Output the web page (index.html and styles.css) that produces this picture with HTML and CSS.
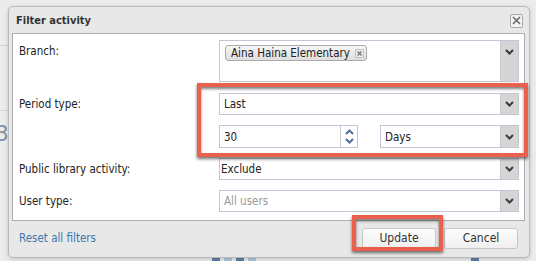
FILE: index.html
```html
<!DOCTYPE html>
<html lang="en">
<head>
    <meta charset="UTF-8">
    <meta name="viewport" content="width=device-width, initial-scale=1.0">
    <title>Filter activity</title>
    <link rel="stylesheet" href="styles.css">
</head>
<body>
    <!-- page behind the modal -->
    <div class="page">
        <div class="page-line line-a"></div>
        <div class="page-line line-b"></div>
        <div class="page-num">3</div>
        <div class="page-bars">
            <span class="bar dark"></span>
            <span class="bar light"></span>
            <span class="bar dark"></span>
            <span class="bar light"></span>
        </div>
        <span class="bar dark lone"></span>
    </div>

    <div class="dialog">
        <div class="dialog-title">
            <span>Filter activity</span>
            <span class="close-btn">
                <svg width="9" height="9" viewBox="0 0 9 9"><path d="M1 1 L8 8 M8 1 L1 8" stroke="#6a6a6a" stroke-width="1.6" fill="none"/></svg>
            </span>
        </div>

        <div class="dialog-body">
            <div class="row">
                <div class="label">Branch:</div>
                <div class="field multi">
                    <span class="chip">Aina Haina Elementary
                        <span class="chip-x">
                            <svg width="7" height="7" viewBox="0 0 7 7"><path d="M1.5 1.5 L5.5 5.5 M5.5 1.5 L1.5 5.5" stroke="#777" stroke-width="1.4" fill="none"/></svg>
                        </span>
                    </span>
                    <span class="arrow top">
                        <svg width="9" height="6" viewBox="0 0 9 6"><path d="M1 1 L4.5 4.5 L8 1" stroke="#3a3a3a" stroke-width="2" fill="none"/></svg>
                    </span>
                </div>
            </div>

            <div class="row">
                <div class="label">Period type:</div>
                <div class="stack">
                    <div class="field select">
                        <span class="value">Last</span>
                        <span class="arrow">
                            <svg width="9" height="6" viewBox="0 0 9 6"><path d="M1 1 L4.5 4.5 L8 1" stroke="#3a3a3a" stroke-width="2" fill="none"/></svg>
                        </span>
                    </div>
                    <div class="pair">
                        <div class="field spin">
                            <span class="value">30</span>
                            <span class="spinner">
                                <svg width="9" height="6" viewBox="0 0 9 6"><path d="M1 5 L4.5 1.5 L8 5" stroke="#4d6f9c" stroke-width="2" fill="none"/></svg>
                                <svg width="9" height="6" viewBox="0 0 9 6"><path d="M1 1 L4.5 4.5 L8 1" stroke="#4d6f9c" stroke-width="2" fill="none"/></svg>
                            </span>
                        </div>
                        <div class="field select">
                            <span class="value">Days</span>
                            <span class="arrow">
                                <svg width="9" height="6" viewBox="0 0 9 6"><path d="M1 1 L4.5 4.5 L8 1" stroke="#3a3a3a" stroke-width="2" fill="none"/></svg>
                            </span>
                        </div>
                    </div>
                </div>
            </div>

            <div class="row">
                <div class="label">Public library activity:</div>
                <div class="field select">
                    <span class="value tight">Exclude</span>
                    <span class="arrow">
                        <svg width="9" height="6" viewBox="0 0 9 6"><path d="M1 1 L4.5 4.5 L8 1" stroke="#3a3a3a" stroke-width="2" fill="none"/></svg>
                    </span>
                </div>
            </div>

            <div class="row last">
                <div class="label">User type:</div>
                <div class="field select">
                    <span class="value placeholder">All users</span>
                    <span class="arrow">
                        <svg width="9" height="6" viewBox="0 0 9 6"><path d="M1 1 L4.5 4.5 L8 1" stroke="#3a3a3a" stroke-width="2" fill="none"/></svg>
                    </span>
                </div>
            </div>
        </div>

        <div class="dialog-footer">
            <a class="reset-link" href="#">Reset all filters</a>
            <div class="buttons">
                <button class="btn">Update</button>
                <button class="btn">Cancel</button>
            </div>
        </div>
    </div>

    <!-- annotation boxes drawn over the screenshot -->
    <div class="highlight hl-period"></div>
    <div class="highlight hl-update"></div>
</body>
</html>
```

FILE: styles.css
```css
body {
    margin: 0;
    width: 536px;
    height: 261px;
    overflow: hidden;
    position: relative;
    background: #e9e9e9;
    font-family: "DejaVu Sans Condensed", "DejaVu Sans", sans-serif;
    font-stretch: condensed;
    font-size: 11.5px;
    color: #222;
}

/* background page */
.page {
    position: absolute;
    inset: 0;
    background: #ececec;
}
.page-line {
    position: absolute;
    left: 0;
    width: 10px;
    height: 1px;
    background: #d4d4d4;
}
.line-a { top: 45px; }
.line-b { top: 110px; }
.page-num {
    position: absolute;
    left: -4px;
    top: 121px;
    font-size: 22px;
    color: #8193a5;
}
.page-bars {
    position: absolute;
    left: 212px;
    top: 257px;
    display: flex;
    gap: 4px;
}
.bar {
    display: block;
    width: 8px;
    height: 6px;
}
.bar.dark { background: #5c7ea3; }
.bar.light { background: #a8c6dc; }
.bar.lone {
    position: absolute;
    left: 471px;
    top: 257px;
}

/* dialog */
.dialog {
    position: absolute;
    left: 8px;
    top: 6px;
    width: 520px;
    height: 250px;
    border: 1px solid #b9b9b9;
    border-radius: 5px;
    background: #e8e8e8;
    box-shadow: 0 1px 4px rgba(0, 0, 0, 0.18);
    display: flex;
    flex-direction: column;
}
.dialog-title {
    height: 26px;
    display: flex;
    align-items: center;
    justify-content: space-between;
    padding: 0 6px 0 7px;
    font-weight: bold;
    font-size: 11px;
    color: #333;
}
.close-btn {
    width: 11px;
    height: 12px;
    border: 1px solid #a9a9a9;
    border-radius: 2px;
    background: #f3f3f3;
    display: flex;
    align-items: center;
    justify-content: center;
    margin-top: 1px;
}

.dialog-body {
    margin: 0 4px 0 3px;
    border: 1px solid #adadad;
    background: #fff;
    padding: 6px 5px 10px 6px;
    height: 170px;
}
.row {
    display: flex;
    align-items: flex-start;
    margin-bottom: 10px;
}
.row:first-child { margin-bottom: 11px; }
.row.last { margin-bottom: 0; }
.label {
    width: 200px;
    line-height: 22px;
    flex-shrink: 0;
}

.field {
    position: relative;
    box-sizing: border-box;
    height: 22px;
    border: 1px solid #c5c5d6;
    background: #fff;
    display: flex;
    align-items: center;
    flex: 1;
}
.field.multi {
    height: 42px;
    align-items: flex-start;
    padding: 4px 0 0 5px;
}
.value {
    padding-left: 4px;
    flex: 1;
}
.value.tight { padding-left: 1px; }
.value.placeholder { color: #999; }

.arrow {
    align-self: stretch;
    width: 17px;
    background: #d5d5d5;
    border-left: 1px solid #c8c8c8;
    display: flex;
    align-items: center;
    justify-content: center;
}
.arrow.top {
    position: absolute;
    right: 0;
    top: 0;
    bottom: 0;
    align-items: flex-start;
    padding-top: 8px;
}

.chip {
    display: inline-flex;
    align-items: center;
    gap: 5px;
    height: 14px;
    padding: 0 2px 0 5px;
    border: 1px solid #aaa;
    border-radius: 3px;
    background: linear-gradient(#f6f6f6, #dedede);
    color: #222;
    line-height: 14px;
}
.chip-x {
    width: 9px;
    height: 9px;
    box-sizing: border-box;
    border: 1px solid #c4c4c4;
    background: #ececec;
    display: flex;
    align-items: center;
    justify-content: center;
}

.stack {
    flex: 1;
    display: flex;
    flex-direction: column;
    gap: 10px;
}
.stack > .field {
    flex: none;
}
.pair {
    display: flex;
    gap: 22px;
    height: 23px;
}
.pair .field {
    flex: 1;
    height: 23px;
}
.spinner {
    align-self: stretch;
    width: 16px;
    border-left: 1px solid #c8c8d8;
    display: flex;
    flex-direction: column;
    align-items: center;
    justify-content: center;
    gap: 3px;
}

/* footer */
.dialog-footer {
    flex: 1;
    display: flex;
    align-items: center;
    justify-content: space-between;
    padding: 0 11px 2px 10px;
}
.reset-link {
    color: #3b78aa;
    text-decoration: none;
}
.buttons {
    display: flex;
    gap: 8px;
}
.btn {
    font: inherit;
    font-size: 12px;
    color: #333;
    height: 21px;
    width: 74px;
    border: 1px solid #c6c6c6;
    border-radius: 3px;
    background: linear-gradient(#fdfdfd, #efefef);
    padding: 0;
}

/* red annotation boxes */
.highlight {
    position: absolute;
    box-sizing: border-box;
    border: 4px solid #ea604e;
    box-shadow: 0 2px 3px rgba(0, 0, 0, 0.55), inset 0 2px 3px rgba(0, 0, 0, 0.5);
}
.hl-period {
    left: 197px;
    top: 83px;
    width: 331px;
    height: 74px;
}
.hl-update {
    left: 352px;
    top: 215px;
    width: 91px;
    height: 36px;
}
```
